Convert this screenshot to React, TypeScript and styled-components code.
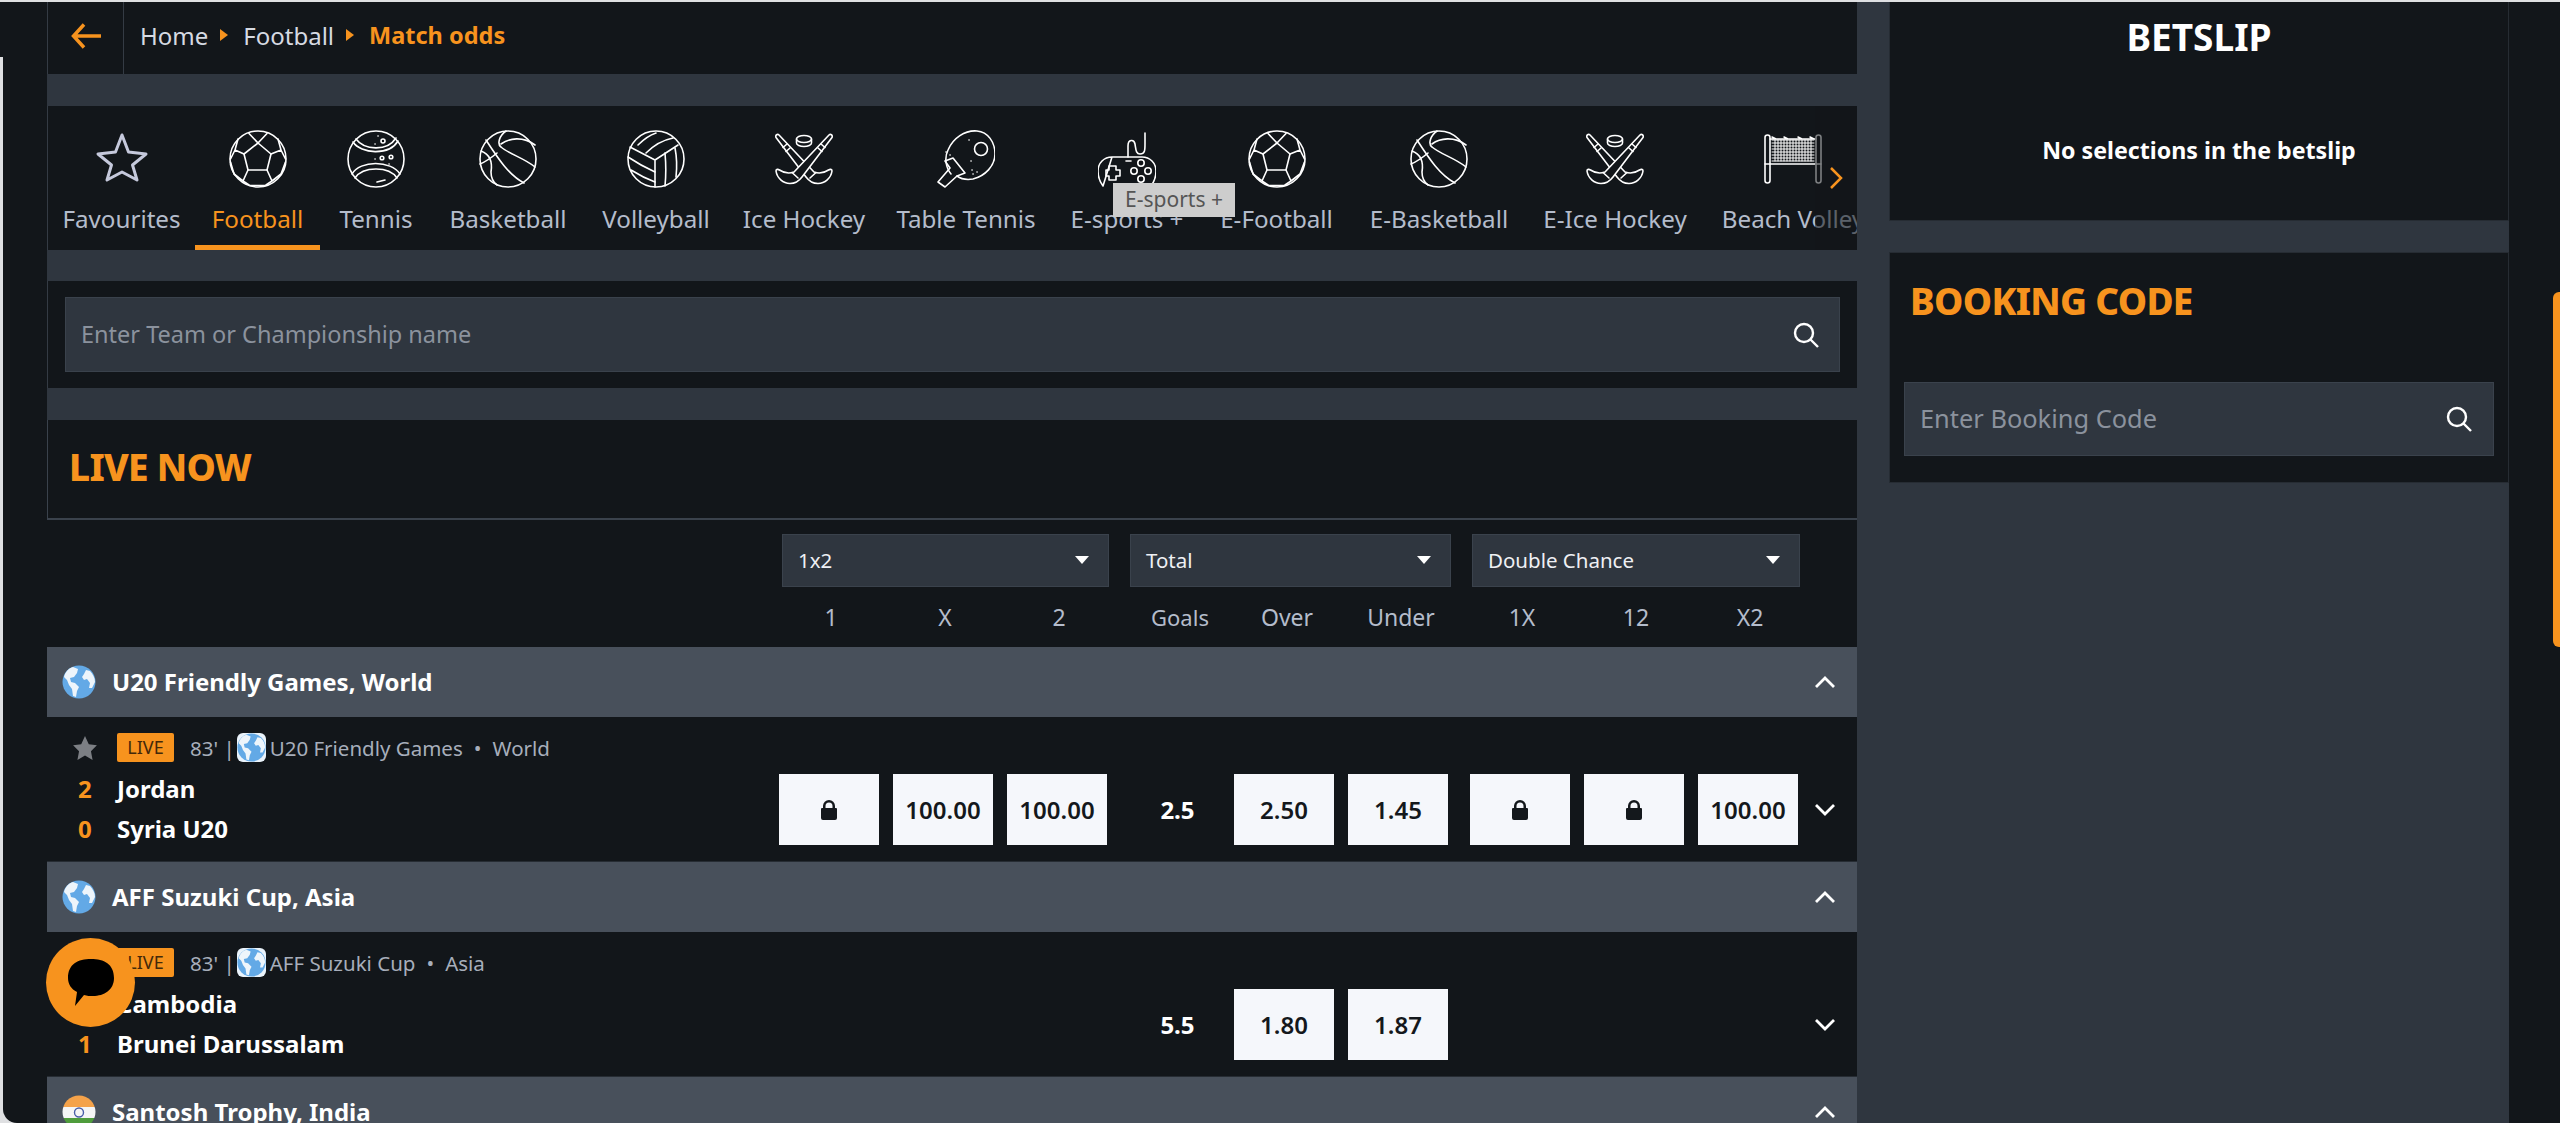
import React from "react";
import styled, { createGlobalStyle } from "styled-components";

const DARK = "#12161a";
const GAP = "#2f363f";
const HEAD = "#48505b";
const ORANGE = "#f7931e";
const MUTED = "#b4bccb";
const FONT = `"Noto Sans", "Open Sans", sans-serif`;

const Global = createGlobalStyle`
  html, body { margin: 0; padding: 0; background: #dfe0e2; overflow: hidden; }
  body { font-family: ${FONT}; }
  * { box-sizing: border-box; }
`;

const Frame = styled.div`
  position: relative;
  width: 2560px;
  height: 1123px;
  overflow: hidden;
  padding: 2px 0 0 3px;
  &::before {
    content: "";
    position: absolute;
    left: 0;
    top: 2px;
    width: 3px;
    height: 55px;
    background: ${DARK};
  }
`;
const Window = styled.div`
  display: flex;
  height: 100%;
  background: ${DARK};
  border-bottom-left-radius: 14px;
  overflow: hidden;
`;
const LeftGutter = styled.div`
  width: 44px;
  flex: none;
`;
const Content = styled.div`
  display: flex;
  width: 2462px;
  flex: none;
  background: ${GAP};
`;
const MainCol = styled.main`
  width: 1810px;
  flex: none;
  display: flex;
  flex-direction: column;
`;
const SideCol = styled.aside`
  flex: 1;
  padding-left: 32px;
  display: flex;
  flex-direction: column;
`;
const RightGutter = styled.div`
  flex: 1;
  position: relative;
`;
const ScrollThumb = styled.div`
  position: absolute;
  right: 0;
  top: 290px;
  width: 7px;
  height: 355px;
  background: ${ORANGE};
  border-radius: 6px 0 0 6px;
`;

const Header = styled.header`
  height: 72px;
  flex: none;
  display: flex;
  background: ${DARK};
  border-left: 1px solid #343b44;
  margin-bottom: 32px;
`;
const BackBox = styled.div`
  width: 76px;
  display: flex;
  align-items: center;
  justify-content: center;
  border-right: 1px solid #343b44;
  padding-bottom: 4px;
`;
const Crumbs = styled.nav`
  display: flex;
  align-items: center;
  padding: 0 0 6px 16px;
  font-size: 24px;
  color: #d6dae2;
`;
const Crumb = styled.span<{ $active?: boolean }>`
  color: ${(p) => (p.$active ? ORANGE : "#d6dae2")};
  font-weight: ${(p) => (p.$active ? 700 : 400)};
  font-size: ${(p) => (p.$active ? 23.5 : 24)}px;
`;
const CrumbSep = styled.i`
  width: 0;
  height: 0;
  margin: 0 15px 0 12px;
  border-left: 8px solid ${ORANGE};
  border-top: 6px solid transparent;
  border-bottom: 6px solid transparent;
`;

const SportsBar = styled.section`
  position: relative;
  height: 144px;
  flex: none;
  background: ${DARK};
  border-left: 1px solid #343b44;
  display: flex;
  overflow: hidden;
  margin-bottom: 31px;
`;
const Sport = styled.div<{ $w: number; $active?: boolean }>`
  position: relative;
  flex: none;
  width: ${(p) => p.$w}px;
  padding-top: 24px;
  display: flex;
  flex-direction: column;
  align-items: center;
  &::after {
    content: "";
    display: ${(p) => (p.$active ? "block" : "none")};
    position: absolute;
    left: 0;
    right: 0;
    bottom: 0;
    height: 5px;
    background: ${ORANGE};
  }
`;
const SportIcon = styled.svg`
  width: 58px;
  height: 58px;
  fill: none;
  stroke: #fff;
  stroke-width: 1.6;
  stroke-linejoin: round;
  stroke-linecap: round;
  display: block;
`;
const StarIcon = styled(SportIcon)`
  stroke: #c5c9dc;
  stroke-width: 3;
`;
const SportLabel = styled.span<{ $active?: boolean }>`
  margin-top: 15px;
  font-size: 24.2px;
  line-height: 32px;
  white-space: nowrap;
  color: ${(p) => (p.$active ? ORANGE : MUTED)};
`;
const ScrollFade = styled.div`
  position: absolute;
  right: 0;
  top: 0;
  bottom: 0;
  width: 42px;
  background: rgba(18, 22, 26, 0.55);
  display: flex;
  align-items: center;
  padding: 0 0 0 14px;
`;
const Tooltip = styled.div`
  position: absolute;
  left: 1065px;
  top: 77px;
  width: 122px;
  height: 34px;
  background: #cdcdcd;
  color: #555;
  font-size: 21px;
  line-height: 32px;
  text-align: center;
`;

const SearchPanel = styled.section`
  height: 107px;
  flex: none;
  background: ${DARK};
  border-left: 1px solid #343b44;
  padding: 16px 17px;
  margin-bottom: 32px;
`;
const SearchBox = styled.div`
  height: 100%;
  background: ${GAP};
  border: 1px solid #3a424c;
  display: flex;
  align-items: center;
  justify-content: space-between;
  padding: 0 20px 0 15px;
`;
const Placeholder = styled.span<{ $size: number }>`
  color: #8b929d;
  font-size: ${(p) => p.$size}px;
  margin-bottom: 2px;
`;
const LivePanel = styled.section`
  height: 100px;
  flex: none;
  background: ${DARK};
  border-left: 1px solid #3a424c;
  border-bottom: 2px solid #3a424c;
  padding: 25px 0 0 21px;
`;
const OrangeTitle = styled.h2`
  margin: 0;
  color: ${ORANGE};
  font-size: 37px;
  letter-spacing: -0.7px;
  line-height: 44px;
  font-weight: 800;
`;
const MarketsPanel = styled.section`
  height: 127px;
  flex: none;
  background: ${DARK};
  padding: 14px 0 0 735px;
`;
const Selectors = styled.div`
  display: flex;
  gap: 21px;
`;
const Selector = styled.div<{ $w: number }>`
  width: ${(p) => p.$w}px;
  height: 53px;
  background: ${GAP};
  border: 1px solid #3a424c;
  color: #eef0f4;
  font-size: 20.5px;
  display: flex;
  align-items: center;
  justify-content: space-between;
  padding: 0 19px 2px 15px;
  &::after {
    content: "";
    width: 0;
    height: 0;
    border-top: 8px solid #fff;
    border-left: 7px solid transparent;
    border-right: 7px solid transparent;
  }
`;
const ColumnLabels = styled.div`
  display: flex;
  margin: 10px 0 0 -8px;
`;
const ColumnLabel = styled.span<{ $w?: number; $small?: boolean; $after?: number; $before?: number }>`
  flex: none;
  width: ${(p) => p.$w ?? 114}px;
  margin-right: ${(p) => p.$after ?? 0}px;
  padding-left: ${(p) => p.$before ?? 0}px;
  text-align: center;
  font-size: ${(p) => (p.$small ? 22 : 23)}px;
  line-height: 40px;
  color: ${MUTED};
`;

const LeagueHead = styled.div`
  height: 70px;
  flex: none;
  background: ${HEAD};
  display: flex;
  align-items: center;
  padding: 0 22px 0 15px;
  gap: 16px;
`;
const LeagueTitle = styled.h3`
  flex: 1;
  margin: 0;
  color: #fff;
  font-size: 24px;
  font-weight: 700;
  line-height: 32px;
`;
const MatchRow = styled.div`
  height: 145px;
  flex: none;
  background: ${DARK};
  border-bottom: 1px solid #262c33;
  display: flex;
`;
const MatchInfo = styled.div`
  width: 732px;
  flex: none;
  padding: 16px 0 0 25px;
`;
const MetaLine = styled.div`
  display: flex;
  align-items: center;
  height: 29px;
  color: #a7aebb;
  font-size: 20.5px;
`;
const FavStar = styled.svg`
  width: 26px;
  height: 26px;
  fill: #7c7f84;
  flex: none;
  margin-right: 19px;
`;
const LiveBadge = styled.span`
  width: 57px;
  height: 29px;
  background: ${ORANGE};
  color: #43290a;
  border-radius: 2px;
  font-size: 18px;
  line-height: 29px;
  text-align: center;
  margin-right: 16px;
`;
const Minute = styled.span`
  margin-right: 2px;
  white-space: nowrap;
`;
const FlagSlot = styled.span`
  display: flex;
  width: 29px;
  height: 29px;
  flex: none;
  margin-right: 4px;
`;
const Dot = styled.span`
  margin: 0 11px;
`;
const Team = styled.div`
  display: flex;
  align-items: center;
  height: 40px;
  color: #fff;
  font-size: 24px;
  font-weight: 700;
`;
const FirstTeam = styled(Team)`
  margin-top: 6px;
`;
const Score = styled.span`
  width: 45px;
  padding-left: 6px;
  color: ${ORANGE};
`;
const OddsArea = styled.div`
  flex: 1;
  display: flex;
  align-items: flex-start;
  padding-top: 57px;
`;
const OddsGroup = styled.div<{ $w: number; $after?: number }>`
  display: flex;
  gap: 14px;
  width: ${(p) => p.$w}px;
  flex: none;
  margin-right: ${(p) => p.$after ?? 0}px;
`;
const Odd = styled.button`
  width: 100px;
  height: 71px;
  flex: none;
  border: 0;
  padding: 0;
  background: #f5f7fb;
  color: #14181c;
  font-family: ${FONT};
  font-size: 24px;
  font-weight: 600;
  display: flex;
  align-items: center;
  justify-content: center;
`;
const GoalsValue = styled.span`
  width: 127px;
  flex: none;
  height: 71px;
  padding-left: 14px;
  color: #fff;
  font-size: 24px;
  font-weight: 700;
  display: flex;
  align-items: center;
  justify-content: center;
`;
const ExpandCell = styled.div`
  flex: 1;
  height: 71px;
  display: flex;
  align-items: center;
  padding-left: 18px;
`;
const Chevron = styled.svg`
  width: 20px;
  height: 12px;
  fill: none;
  stroke: #fff;
  stroke-width: 2.8;
  flex: none;
`;

const BetslipPanel = styled.section`
  height: 219px;
  flex: none;
  background: ${DARK};
  border: 1px solid #262c33;
  border-top: 0;
  padding-top: 13px;
  margin-bottom: 31px;
  text-align: center;
  width: 620px;
`;
const BetslipTitle = styled.h2`
  margin: 0;
  color: #fff;
  font-size: 37px;
  line-height: 44px;
  font-weight: 700;
`;
const BetslipEmpty = styled.p`
  margin: 74px 0 0;
  color: #fff;
  font-size: 23.2px;
  line-height: 34px;
  font-weight: 700;
`;
const BookingPanel = styled.section`
  height: 231px;
  width: 620px;
  flex: none;
  background: ${DARK};
  border: 1px solid #262c33;
  padding: 26px 14px 0;
`;
const BookingTitle = styled(OrangeTitle)`
  padding-left: 6px;
  margin-bottom: 59px;
`;
const BookingInput = styled(SearchBox)`
  height: 74px;
  padding: 0 21px 0 15px;
`;
const ChatBubble = styled.div`
  position: absolute;
  left: 46px;
  top: 938px;
  width: 89px;
  height: 89px;
  border-radius: 50%;
  background: ${ORANGE};
  display: flex;
  align-items: center;
  justify-content: center;
`;

const Soccer = () => (
  <SportIcon viewBox="0 0 58 58">
    <circle cx="29" cy="29" r="28" />
    <path d="M29 13 42 24 38 40H19L15 24Z" />
    <path d="M20 3.500 29 13 38 3.500M15 24 6 20 1.500 29M42 24 52 20 56.500 29M6 20 9 9M52 20 49 9M19 40 14 51 20 55M38 40 43 51 37 55M20 55.500H37M5 44 14 51M52 44 43 51M1.500 32 5 44M56.500 32 52 44" />
  </SportIcon>
);
const TennisBall = () => (
  <SportIcon viewBox="0 0 58 58">
    <circle cx="29" cy="29" r="28" />
    <path d="M6 12C14 24 42 26 51 11M9 9C17 20 40 22 49 8" />
    <path d="M5 44C13 30 44 30 53 44M8 48C16 36 42 36 50 48" />
    <circle cx="36" cy="11" r="2" />
    <circle cx="35" cy="28" r="1.800" />
    <circle cx="44" cy="27" r="1.800" />
    <path d="M30 52 38 50M28 14h.1M31 6h.1M42 34h.1M28 29h.1" />
  </SportIcon>
);
const Basket = () => (
  <SportIcon viewBox="0 0 58 58">
    <circle cx="29" cy="29" r="28" />
    <path d="M7 10C20 30 30 45 45 53" />
    <path d="M27 1C20 6 18 14 22 17 30 24 45 28 56 37" />
    <path d="M22 14C30 8 44 6 56 15" />
    <path d="M2 21C10 24 14 30 12 42 12 48 14 52 18 55" />
    <path d="M1 34C6 32 12 28 18 23" />
  </SportIcon>
);
const Volley = () => (
  <SportIcon viewBox="0 0 58 58">
    <circle cx="29" cy="29" r="28" />
    <path d="M3 17 28 30V57M28 30 51 15" />
    <path d="M11 15C17 9 23 5 29 3M19 23C26 16 36 10 46 8" />
    <path d="M1 27C10 33 19 38 28 42M4 40C12 45 20 49 28 52" />
    <path d="M38 23C39 34 39 46 38 56M48 18C50 28 50 38 49 47" />
  </SportIcon>
);
const HockeyStick = ({ flip }: { flip?: boolean }) => (
  <g transform={flip ? "translate(58 0) scale(-1 1)" : undefined} fill={DARK}>
    <path d="M54 5C55.500 3.500 58 5 57 7.500L27 47C24 51 20 53.500 15 53.500 8 53.500 2 48 1 41 1 39 3 39 4.500 40 9 43 14 44 19 42Z" />
    <path d="M46 14 50 17.500M43 18 47 21.500M17 42.500 23 48" />
  </g>
);
const Hockey = () => (
  <SportIcon viewBox="0 0 58 58">
    <HockeyStick flip />
    <HockeyStick />
    <ellipse cx="29" cy="9" rx="7.500" ry="3.500" />
    <path d="M21.500 9V13C21.500 15 25 16.500 29 16.500S36.500 15 36.500 13V9" />
  </SportIcon>
);
const Paddle = () => (
  <SportIcon viewBox="0 0 58 58">
    <path d="M14 44C9 38 7 28 11 20 16 8 28 0 40 1 51 2 58 12 58 24 58 36 48 46 36 49 30 50 24 49 20 46" />
    <circle cx="44" cy="19" r="6.500" />
    <path d="M8 31 16 28 28 43 20 46 8 57 1 52 13 38Z" />
    <path d="M9 22h.1M13 25h.1M32 10h.1M34 31h.1M36 44h.1M40 42h.1M35 40h.1" />
  </SportIcon>
);
const GamePad = () => (
  <SportIcon viewBox="0 0 58 58">
    <path d="M14 27H44C52 27 58 33 58 41 58 47 56 52 53 56M5 56C2 52 0 47 0 41 0 33 6 27 14 27Z" />
    <path d="M30 27V16C30 9 36 9 37 14 38 20 38 24 42 24 47 24 47 20 47 14V3" />
    <path d="M11 36H18V40H22V46H18V50H11V46H8V40H11Z" />
    <circle cx="43" cy="33" r="3.200" />
    <circle cx="36" cy="41" r="3.200" />
    <circle cx="50" cy="41" r="3.200" />
    <circle cx="43" cy="49" r="3.200" />
    <path d="M28 31H33" />
  </SportIcon>
);
const NetGrid = () => {
  const xs = Array.from({ length: 13 }, (_, i) => 11 + i * 3);
  const ys = Array.from({ length: 8 }, (_, i) => 10 + i * 3);
  return (
    <g strokeWidth="1">
      {xs.map((x) => (
        <path key={`x${x}`} d={`M${x} 10V31`} />
      ))}
      {ys.map((y) => (
        <path key={`y${y}`} d={`M8 ${y}H50`} />
      ))}
    </g>
  );
};
const BeachNet = () => (
  <SportIcon viewBox="0 0 58 58">
    <rect x="1" y="5" width="5" height="48" rx="2.500" />
    <rect x="52" y="5" width="5" height="48" rx="2.500" />
    <path d="M1 34H6M52 34H57M6 9H52M6 34H52M8 7 12 9M20 7 24 9M34 7 38 9M46 7 50 9" />
    <NetGrid />
  </SportIcon>
);
const StarOutline = () => (
  <StarIcon viewBox="0 0 58 58">
    <path d="M29 5 35.500 22 53 24 39.500 35 44 50 29 42 14 50 18.500 35 5 24 22.500 22Z" />
  </StarIcon>
);

const SPORTS: { label: string; w: number; icon: React.ReactNode; active?: boolean }[] = [
  { label: "Favourites", w: 147, icon: <StarOutline /> },
  { label: "Football", w: 125, icon: <Soccer />, active: true },
  { label: "Tennis", w: 112, icon: <TennisBall /> },
  { label: "Basketball", w: 152, icon: <Basket /> },
  { label: "Volleyball", w: 144, icon: <Volley /> },
  { label: "Ice Hockey", w: 152, icon: <Hockey /> },
  { label: "Table Tennis", w: 172, icon: <Paddle /> },
  { label: "E-sports +", w: 150, icon: <GamePad /> },
  { label: "E-Football", w: 149, icon: <Soccer /> },
  { label: "E-Basketball", w: 176, icon: <Basket /> },
  { label: "E-Ice Hockey", w: 176, icon: <Hockey /> },
  { label: "Beach Volley", w: 180, icon: <BeachNet /> },
];

const Globe = ({ size, rounded }: { size: number; rounded?: boolean }) => (
  <svg width={size} height={size} viewBox="0 0 34 34" style={{ flex: "none" }}>
    {rounded && <rect width="34" height="34" rx="7" fill="#eaf3fb" />}
    <circle cx="17" cy="17" r="16.500" fill="#63a9e6" />
    <path
      fill="#eef5fb"
      d="M11 2C7 3 3 7 2 12L5 15 7 20 10 24 11 31 14 32 15 26 17 22 13 18 9 17 8 13 12 12 15 8 16 4ZM22 9 20 12 22 15 25 14 28 18 27 23 30 23 33 17C33 13 31 9 28 6L24 5Z"
    />
  </svg>
);
const India = () => (
  <svg width={34} height={34} viewBox="0 0 34 34" style={{ flex: "none" }}>
    <clipPath id="in">
      <circle cx="17" cy="17" r="16.500" />
    </clipPath>
    <g clipPath="url(#in)">
      <rect width="34" height="12" fill="#f4a24a" />
      <rect y="12" width="34" height="11" fill="#f5f5f5" />
      <rect y="23" width="34" height="11" fill="#4f9c3c" />
      <circle cx="17" cy="17.500" r="4.500" fill="none" stroke="#4a5fa8" strokeWidth="1.400" />
    </g>
  </svg>
);

const Up = () => (
  <Chevron viewBox="0 0 20 12">
    <path d="M1 11 10 2 19 11" />
  </Chevron>
);
const Down = () => (
  <Chevron viewBox="0 0 20 12">
    <path d="M1 1 10 10 19 1" />
  </Chevron>
);
const Lock = () => (
  <svg width="16" height="20" viewBox="0 0 16 20">
    <path fill="#14181c" d="M2 8V6a6 6 0 0 1 12 0v2h1a1 1 0 0 1 1 1v9a2 2 0 0 1-2 2H2a2 2 0 0 1-2-2V9a1 1 0 0 1 1-1ZM4.500 8h7V6a3.500 3.500 0 0 0-7 0Z" />
  </svg>
);
const Search = () => (
  <svg width="26" height="26" viewBox="0 0 26 26" fill="none" stroke="#fff" strokeWidth="2.400">
    <circle cx="11" cy="11" r="9" />
    <path d="M17.500 17.500 25 25" />
  </svg>
);
const Bubble = () => (
  <svg width="46" height="48" viewBox="0 0 46 48">
    <path fill="#000" d="M23 0C36 0 46 5 46 19 46 31 36 37 25 37 22 37 19 37 16 36L7 47 9 33C3 30 0 25 0 19 0 5 10 0 23 0Z" />
  </svg>
);

const Cell = ({ value }: { value: string | null }) => <Odd>{value === null ? <Lock /> : value}</Odd>;

const Match = ({
  league,
  region,
  home,
  away,
  hs,
  as,
  goals,
  odds,
}: {
  league: string;
  region: string;
  home: string;
  away: string;
  hs: string;
  as: string;
  goals: string;
  odds: (string | null)[][];
}) => (
  <MatchRow>
    <MatchInfo>
      <MetaLine>
        <FavStar viewBox="0 0 24 24">
          <path d="M12 1 15.500 8.500 23 9.500 17.500 15 19 23 12 19 5 23 6.500 15 1 9.500 8.500 8.500Z" />
        </FavStar>
        <LiveBadge>LIVE</LiveBadge>
        <Minute>83' |</Minute>
        <FlagSlot>
          <Globe size={29} rounded />
        </FlagSlot>
        {league}
        <Dot>•</Dot>
        {region}
      </MetaLine>
      <FirstTeam>
        <Score>{hs}</Score>
        {home}
      </FirstTeam>
      <Team>
        <Score>{as}</Score>
        {away}
      </Team>
    </MatchInfo>
    <OddsArea>
      <OddsGroup $w={328}>
        {odds[0].map((o, i) => (
          <Cell key={i} value={o} />
        ))}
      </OddsGroup>
      <GoalsValue>{goals}</GoalsValue>
      <OddsGroup $w={214} $after={22}>
        {odds[1].map((o, i) => (
          <Cell key={i} value={o} />
        ))}
      </OddsGroup>
      <OddsGroup $w={327}>
        {odds[2].map((o, i) => (
          <Cell key={i} value={o} />
        ))}
      </OddsGroup>
      <ExpandCell>
        <Down />
      </ExpandCell>
    </OddsArea>
  </MatchRow>
);

export default function App() {
  return (
    <Frame>
      <Global />
      <Window>
        <LeftGutter />
        <Content>
          <MainCol>
            <Header>
              <BackBox>
                <svg width="30" height="26" viewBox="0 0 30 26" fill="none" stroke={ORANGE} strokeWidth="3.500">
                  <path d="M13 1.500 2.500 13 13 24.500M2.500 13H30" />
                </svg>
              </BackBox>
              <Crumbs>
                <Crumb>Home</Crumb>
                <CrumbSep />
                <Crumb>Football</Crumb>
                <CrumbSep />
                <Crumb $active>Match odds</Crumb>
              </Crumbs>
            </Header>
            <SportsBar>
              {SPORTS.map((s) => (
                <Sport key={s.label} $w={s.w} $active={s.active}>
                  {s.icon}
                  <SportLabel $active={s.active}>{s.label}</SportLabel>
                </Sport>
              ))}
              <ScrollFade>
                <svg width="14" height="22" viewBox="0 0 14 22" fill="none" stroke={ORANGE} strokeWidth="2.500">
                  <path d="M2 1 12 11 2 21" />
                </svg>
              </ScrollFade>
              <Tooltip>E-sports +</Tooltip>
            </SportsBar>
            <SearchPanel>
              <SearchBox>
                <Placeholder $size={23.5}>Enter Team or Championship name</Placeholder>
                <Search />
              </SearchBox>
            </SearchPanel>
            <LivePanel>
              <OrangeTitle>LIVE NOW</OrangeTitle>
            </LivePanel>
            <MarketsPanel>
              <Selectors>
                <Selector $w={327}>1x2</Selector>
                <Selector $w={321}>Total</Selector>
                <Selector $w={328}>Double Chance</Selector>
              </Selectors>
              <ColumnLabels>
                <ColumnLabel>1</ColumnLabel>
                <ColumnLabel>X</ColumnLabel>
                <ColumnLabel>2</ColumnLabel>
                <ColumnLabel $small $before={14}>Goals</ColumnLabel>
                <ColumnLabel>Over</ColumnLabel>
                <ColumnLabel $after={7}>Under</ColumnLabel>
                <ColumnLabel>1X</ColumnLabel>
                <ColumnLabel>12</ColumnLabel>
                <ColumnLabel>X2</ColumnLabel>
              </ColumnLabels>
            </MarketsPanel>
            <LeagueHead>
              <Globe size={34} />
              <LeagueTitle>U20 Friendly Games, World</LeagueTitle>
              <Up />
            </LeagueHead>
            <Match
              league="U20 Friendly Games"
              region="World"
              hs="2"
              as="0"
              home="Jordan"
              away="Syria U20"
              goals="2.5"
              odds={[[null, "100.00", "100.00"], ["2.50", "1.45"], [null, null, "100.00"]]}
            />
            <LeagueHead>
              <Globe size={34} />
              <LeagueTitle>AFF Suzuki Cup, Asia</LeagueTitle>
              <Up />
            </LeagueHead>
            <Match
              league="AFF Suzuki Cup"
              region="Asia"
              hs="0"
              as="1"
              home="Cambodia"
              away="Brunei Darussalam"
              goals="5.5"
              odds={[[], ["1.80", "1.87"], []]}
            />
            <LeagueHead>
              <India />
              <LeagueTitle>Santosh Trophy, India</LeagueTitle>
              <Up />
            </LeagueHead>
          </MainCol>
          <SideCol>
            <BetslipPanel>
              <BetslipTitle>BETSLIP</BetslipTitle>
              <BetslipEmpty>No selections in the betslip</BetslipEmpty>
            </BetslipPanel>
            <BookingPanel>
              <BookingTitle>BOOKING CODE</BookingTitle>
              <BookingInput>
                <Placeholder $size={25.4}>Enter Booking Code</Placeholder>
                <Search />
              </BookingInput>
            </BookingPanel>
          </SideCol>
        </Content>
        <RightGutter>
          <ScrollThumb />
        </RightGutter>
      </Window>
      <ChatBubble>
        <Bubble />
      </ChatBubble>
    </Frame>
  );
}
